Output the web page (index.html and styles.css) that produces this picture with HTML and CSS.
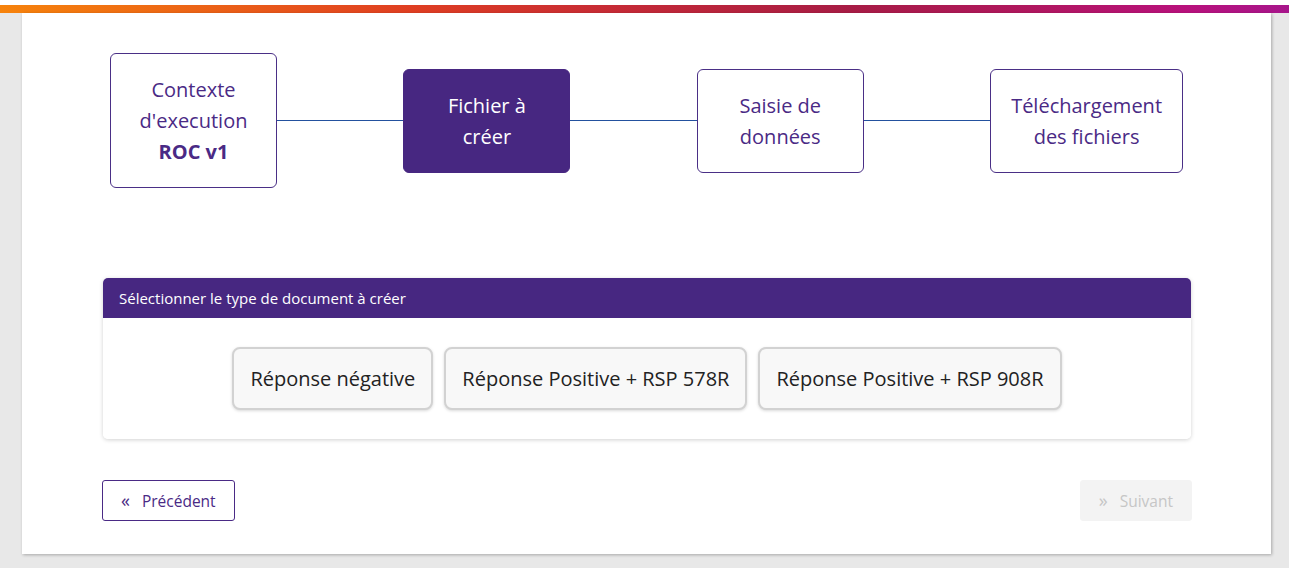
FILE: index.html
```html
<!DOCTYPE html>
<html lang="fr">
<head>
<meta charset="utf-8">
<title>Création de fichiers</title>
<link rel="stylesheet" href="styles.css">
</head>
<body>
<div class="topspace"></div>
<div class="brandbar"></div>
<main class="page">
  <section class="card">
    <div class="stepper">
      <div class="step">Contexte<br>d'execution<br><strong>ROC v1</strong></div>
      <div class="link"></div>
      <div class="step active">Fichier à<br>créer</div>
      <div class="link"></div>
      <div class="step">Saisie de<br>données</div>
      <div class="link"></div>
      <div class="step">Téléchargement<br>des fichiers</div>
    </div>

    <div class="panel">
      <div class="panel-head">Sélectionner le type de document à créer</div>
      <div class="panel-body">
        <button class="choice">Réponse négative</button>
        <button class="choice">Réponse Positive + RSP 578R</button>
        <button class="choice">Réponse Positive + RSP 908R</button>
      </div>
    </div>

    <div class="footer">
      <button class="nav prev"><span class="ico">«</span>Précédent</button>
      <button class="nav next" disabled><span class="ico">»</span>Suivant</button>
    </div>
  </section>
</main>
</body>
</html>
```

FILE: styles.css
```css
* { box-sizing: border-box; }
html, body {
  margin: 0;
  padding: 0;
}
body {
  background: #e8e8e8;
  font-family: "Open Sans", "Noto Sans", sans-serif;
  height: 568px;
  overflow: hidden;
}
.topspace {
  height: 5px;
  background: #ffffff;
}
.brandbar {
  height: 8px;
  background: linear-gradient(90deg, #f6830c 0%, #ea5e18 18%, #df3e22 32%, #c52a36 48%, #a71c45 66%, #b0175f 80%, #b8117c 92%, #a7168b 100%);
}
.page {
  padding-left: 22px;
}
.card {
  width: 1249px;
  height: 541px;
  background: #ffffff;
  box-shadow: 1px 1px 3px rgba(0,0,0,0.28);
  padding: 40px 80px 0 81px;
}
.stepper {
  display: flex;
  align-items: center;
  padding: 0 8px 0 7px;
}
.step {
  min-width: 167px;
  padding: 20px 20px;
  border: 1px solid #4a2f86;
  border-radius: 6px;
  text-align: center;
  color: #4a2a85;
  font-size: 20px;
  line-height: 31px;
  background: #fff;
}
.step strong { font-weight: 700; }
.step.active {
  background: #472781;
  border-color: #472781;
  color: #ffffff;
}
.link {
  flex: 1;
  height: 1px;
  background: #23519e;
}
.panel {
  margin-top: 90px;
  border-radius: 5px;
  box-shadow: 0 1px 4px rgba(0,0,0,0.18);
  overflow: hidden;
}
.panel-head {
  height: 40px;
  background: #472781;
  color: #ffffff;
  font-size: 15px;
  line-height: 40px;
  padding-left: 16px;
}
.panel-body {
  display: flex;
  justify-content: center;
  gap: 11px;
  padding: 29px 0;
  background: #fff;
}
.choice {
  height: 63px;
  padding: 0 16px;
  background: #f8f8f8;
  border: 2px solid #d2d2d2;
  border-radius: 8px;
  box-shadow: 0 1px 3px rgba(0,0,0,0.15);
  font-family: inherit;
  font-size: 20px;
  color: #222222;
}
.footer {
  display: flex;
  justify-content: space-between;
  margin-top: 41px;
  margin-left: -1px;
  margin-right: -1px;
}
.nav {
  height: 41px;
  font-family: inherit;
  font-size: 15.5px;
  border-radius: 3px;
  display: flex;
  align-items: center;
  padding: 0 18px 0 18px;
}
.ico {
  font-size: 18px;
  margin-right: 12px;
  position: relative;
  top: -1px;
}
.prev {
  background: #fff;
  border: 1px solid #4a2a85;
  color: #4a2a85;
}
.next {
  background: #f3f3f3;
  border: 1px solid #f3f3f3;
  color: #c6c6c6;
}
```
